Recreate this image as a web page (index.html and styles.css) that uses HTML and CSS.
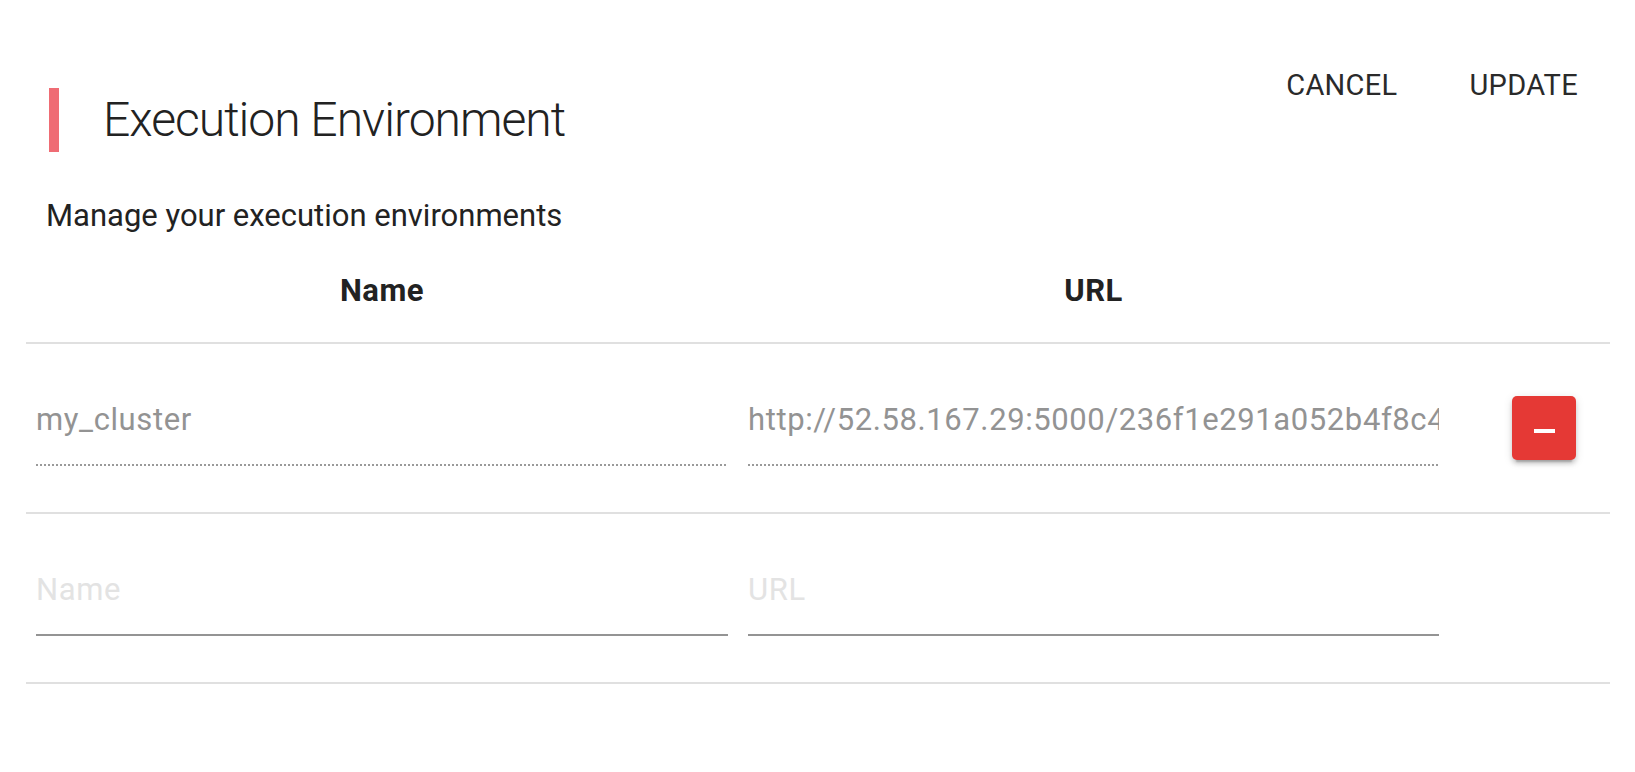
FILE: index.html
```html
<!DOCTYPE html>
<html lang="en">
<head>
<meta charset="utf-8">
<title>Execution Environment</title>
<link rel="stylesheet" href="styles.css">
</head>
<body>
<div class="dialog">
  <div class="header">
    <div class="title-wrap">
      <div class="bar"></div>
      <h1 class="title">Execution Environment</h1>
    </div>
    <div class="actions">
      <button class="text-btn" type="button">CANCEL</button>
      <button class="text-btn" type="button">UPDATE</button>
    </div>
  </div>
  <p class="subtitle">Manage your execution environments</p>
  <div class="table">
    <div class="row head">
      <div class="cell th">Name</div>
      <div class="cell th">URL</div>
      <div class="cell"></div>
    </div>
    <div class="row">
      <div class="cell"><div class="field disabled"><input class="inp" type="text" value="my_cluster" disabled></div></div>
      <div class="cell"><div class="field disabled"><input class="inp" type="text" value="http://52.58.167.29:5000/236f1e291a052b4f8c4bd81f2e52a6b8" disabled></div></div>
      <div class="cell act"><button class="remove" type="button" aria-label="Remove"><span class="minus"></span></button></div>
    </div>
    <div class="row">
      <div class="cell"><div class="field"><input class="inp" type="text" placeholder="Name"></div></div>
      <div class="cell"><div class="field"><input class="inp" type="text" placeholder="URL"></div></div>
      <div class="cell"></div>
    </div>
  </div>
</div>
</body>
</html>
```

FILE: styles.css
```css
html, body {
  margin: 0;
  padding: 0;
  background: #ffffff;
}

body {
  font-family: Roboto, "Liberation Sans", Arial, sans-serif;
  color: #212121;
}

.dialog {
  padding: 49px 25px 0 26px;
}

.header {
  display: flex;
  justify-content: space-between;
  align-items: flex-start;
  padding-left: 23px;
}

.title-wrap {
  display: flex;
  align-items: center;
  margin-top: 39px;
}

.bar {
  width: 10px;
  height: 64px;
  background: #ef6c74;
}

.title {
  margin: 0 0 0 44px;
  font-size: 48px;
  font-weight: 300;
  line-height: 64px;
  letter-spacing: -1px;
  color: #222222;
}

.actions {
  display: flex;
  gap: 8px;
}

.text-btn {
  border: 0;
  background: transparent;
  padding: 0 32px;
  height: 72px;
  line-height: 72px;
  font-family: Roboto, "Liberation Sans", Arial, sans-serif;
  font-size: 29px;
  font-weight: 400;
  letter-spacing: 0.3px;
  color: #2a2a2a;
  cursor: pointer;
}

.subtitle {
  margin: 44px 0 0 0;
  padding-left: 20px;
  font-size: 31px;
  line-height: 40px;
  color: #222222;
}

.row {
  display: grid;
  grid-template-columns: 712px 711px 1fr;
  border-bottom: 2px solid #e0e0e0;
  height: 168px;
  align-items: start;
}

.row.head {
  height: auto;
  padding: 35px 0 31px;
}

.th {
  text-align: center;
  font-size: 31px;
  font-weight: 700;
  line-height: 40px;
  letter-spacing: 0.5px;
  color: #222222;
}

.cell {
  padding: 0 10px;
}

.field {
  margin-top: 54px;
  padding-bottom: 22px;
  border-bottom: 2px solid #949494;
}

.field.disabled {
  border-bottom: 0;
  padding-bottom: 24px;
  background-image: repeating-linear-gradient(90deg, #9a9a9a 0 2px, transparent 2px 4px);
  background-size: 100% 2px;
  background-repeat: no-repeat;
  background-position: left bottom;
}

.inp {
  display: block;
  width: 100%;
  box-sizing: border-box;
  height: 44px;
  margin: 0;
  padding: 0;
  border: 0;
  outline: none;
  background: transparent;
  font-family: Roboto, "Liberation Sans", Arial, sans-serif;
  font-size: 31px;
  line-height: 44px;
  letter-spacing: 0.6px;
  color: #939393;
  -webkit-text-fill-color: #939393;
}

.inp::placeholder {
  color: #e3e3e3;
  -webkit-text-fill-color: #e3e3e3;
  opacity: 1;
}

.act {
  padding-left: 63px;
}

.remove {
  margin-top: 52px;
  width: 64px;
  height: 64px;
  border: 0;
  border-radius: 5px;
  background: #e53935;
  display: flex;
  justify-content: center;
  align-items: flex-start;
  padding: 33px 0 0 0;
  box-shadow: 0 6px 2px -4px rgba(0,0,0,0.2), 0 4px 4px 0 rgba(0,0,0,0.14), 0 2px 10px 0 rgba(0,0,0,0.12);
  cursor: pointer;
}

.minus {
  display: block;
  width: 21px;
  height: 4px;
  background: #ffffff;
}
```
